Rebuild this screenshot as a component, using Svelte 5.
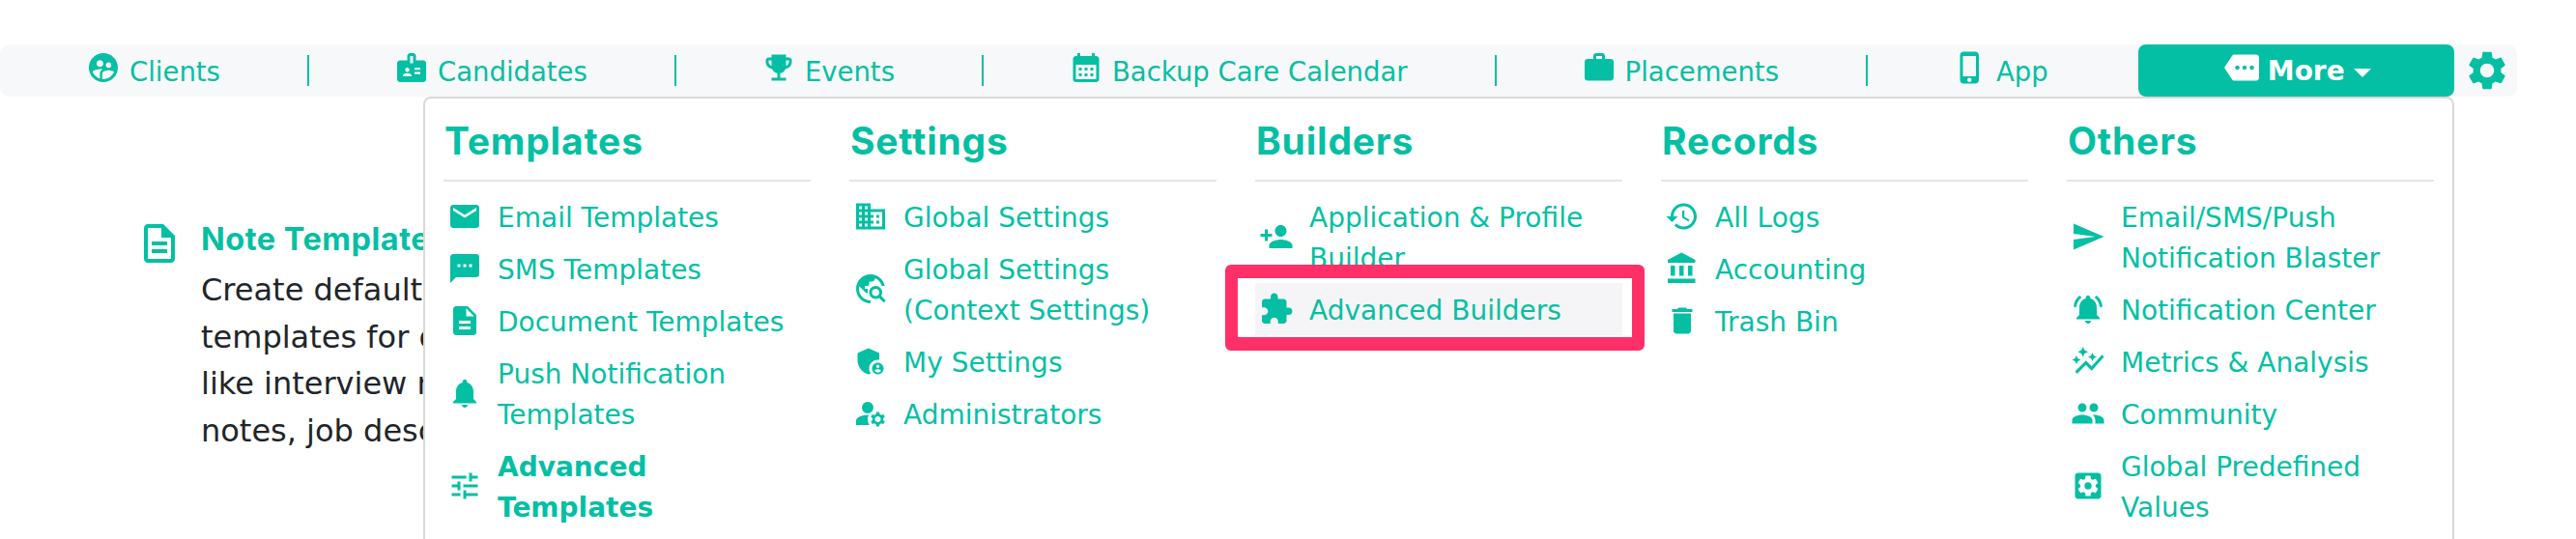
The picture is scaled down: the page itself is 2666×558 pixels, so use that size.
<script>
    // material icon paths, keyed by name
    const icons = {
        clients: "M11.99 2c-5.52 0-10 4.48-10 10s4.48 10 10 10 10-4.48 10-10-4.48-10-10-10zm3.61 6.34c1.07 0 1.93.86 1.93 1.93 0 1.07-.86 1.93-1.93 1.93-1.07 0-1.93-.86-1.93-1.93-.01-1.07.86-1.93 1.93-1.93zm-6-1.58c1.3 0 2.36 1.06 2.36 2.36 0 1.3-1.06 2.36-2.36 2.36s-2.36-1.06-2.36-2.36c0-1.31 1.05-2.36 2.36-2.36zm0 9.13v3.75c-2.4-.75-4.3-2.6-5.14-4.96 1.05-1.12 3.67-1.69 5.14-1.69.53 0 1.2.08 1.9.22-1.64.87-1.9 2.02-1.9 2.68zM11.99 20c-.27 0-.53-.01-.79-.04v-4.07c0-1.42 2.94-2.13 4.4-2.13 1.07 0 2.92.39 3.84 1.15-1.17 2.97-4.06 5.09-7.45 5.09z",
        badge: "M20 7h-5V4c0-1.1-.9-2-2-2h-2c-1.1 0-2 .9-2 2v3H4c-1.1 0-2 .9-2 2v11c0 1.1.9 2 2 2h16c1.1 0 2-.9 2-2V9c0-1.1-.9-2-2-2zM9 12c.83 0 1.5.67 1.5 1.5S9.83 15 9 15s-1.5-.67-1.5-1.5S8.17 12 9 12zm3 6H6v-.75c0-1 2-1.5 3-1.5s3 .5 3 1.5V18zm1-9h-2V4h2v5zm5 7.5h-4V15h4v1.5zm0-3h-4V12h4v1.5z",
        trophy: "M19 5h-2V3H7v2H5c-1.1 0-2 .9-2 2v1c0 2.55 1.92 4.63 4.39 4.94.63 1.5 1.98 2.63 3.61 2.96V19H7v2h10v-2h-4v-3.1c1.63-.33 2.98-1.46 3.61-2.96C19.08 12.63 21 10.55 21 8V7c0-1.1-.9-2-2-2zM5 8V7h2v3.82C5.84 10.4 5 9.3 5 8zm14 0c0 1.3-.84 2.4-2 2.82V7h2v1z",
        calendar: "M19 4h-1V2h-2v2H8V2H6v2H5c-1.11 0-1.99.9-1.99 2L3 20c0 1.1.89 2 2 2h14c1.1 0 2-.9 2-2V6c0-1.1-.9-2-2-2zm0 16H5V10h14v10zM9 14H7v-2h2v2zm4 0h-2v-2h2v2zm4 0h-2v-2h2v2zm-8 4H7v-2h2v2zm4 0h-2v-2h2v2zm4 0h-2v-2h2v2z",
        work: "M20 6h-4V4c0-1.11-.89-2-2-2h-4c-1.11 0-2 .89-2 2v2H4c-1.11 0-1.99.89-1.99 2L2 19c0 1.11.89 2 2 2h16c1.11 0 2-.89 2-2V8c0-1.11-.89-2-2-2zm-6 0h-4V4h4v2z",
        phone: "M15.5 1h-8C6.12 1 5 2.12 5 3.5v17C5 21.88 6.12 23 7.5 23h8c1.38 0 2.5-1.12 2.5-2.5v-17C18 2.12 16.88 1 15.5 1zm-4 21c-.83 0-1.5-.67-1.5-1.5s.67-1.5 1.5-1.5 1.5.67 1.5 1.5-.67 1.5-1.5 1.5zm4.5-4H7V4h9v14z",
        more: "M22 3H7c-.69 0-1.23.35-1.59.88L0 12l5.41 8.11c.36.53.9.89 1.59.89h15c1.1 0 2-.9 2-2V5c0-1.1-.9-2-2-2zM9 13.5c-.83 0-1.5-.67-1.5-1.5s.67-1.5 1.5-1.5 1.5.67 1.5 1.5-.67 1.5-1.5 1.5zm5 0c-.83 0-1.5-.67-1.5-1.5s.67-1.5 1.5-1.5 1.5.67 1.5 1.5-.67 1.5-1.5 1.5zm5 0c-.83 0-1.5-.67-1.5-1.5s.67-1.5 1.5-1.5 1.5.67 1.5 1.5-.67 1.5-1.5 1.5z",
        gear: "M19.14 12.94c.04-.3.06-.61.06-.94 0-.32-.02-.64-.07-.94l2.03-1.58c.18-.14.23-.41.12-.61l-1.92-3.32c-.12-.22-.37-.29-.59-.22l-2.39.96c-.5-.38-1.03-.7-1.62-.94l-.36-2.54c-.04-.24-.24-.41-.48-.41h-3.84c-.24 0-.43.17-.47.41l-.36 2.54c-.59.24-1.13.57-1.62.94l-2.39-.96c-.22-.08-.47 0-.59.22L2.74 8.87c-.12.21-.08.47.12.61l2.03 1.58c-.05.3-.09.63-.09.94s.02.64.07.94l-2.03 1.58c-.18.14-.23.41-.12.61l1.92 3.32c.12.22.37.29.59.22l2.39-.96c.5.38 1.03.7 1.62.94l.36 2.54c.05.24.24.41.48.41h3.84c.24 0 .44-.17.47-.41l.36-2.54c.59-.24 1.13-.56 1.62-.94l2.39.96c.22.08.47 0 .59-.22l1.92-3.32c.12-.22.07-.47-.12-.61l-2.01-1.58zM12 15.6c-1.98 0-3.6-1.62-3.6-3.6s1.62-3.6 3.6-3.6 3.6 1.62 3.6 3.6-1.62 3.6-3.6 3.6z",
        email: "M20 4H4c-1.1 0-1.99.9-1.99 2L2 18c0 1.1.9 2 2 2h16c1.1 0 2-.9 2-2V6c0-1.1-.9-2-2-2zm0 4l-8 5-8-5V6l8 5 8-5v2z",
        sms: "M20 2H4c-1.1 0-1.99.9-1.99 2L2 22l4-4h14c1.1 0 2-.9 2-2V4c0-1.1-.9-2-2-2zM9 11H7V9h2v2zm4 0h-2V9h2v2zm4 0h-2V9h2v2z",
        doc: "M14 2H6c-1.1 0-1.99.9-1.99 2L4 20c0 1.1.89 2 1.99 2H18c1.1 0 2-.9 2-2V8l-6-6zm2 16H8v-2h8v2zm0-4H8v-2h8v2zm-3-5V3.5L18.5 9H13z",
        docOutline: "M14 2H6c-1.1 0-1.99.9-1.99 2L4 20c0 1.1.89 2 1.99 2H18c1.1 0 2-.9 2-2V8l-6-6zm4 18H6V4h7v5h5v11zM8 15h8v2H8zm0-4h8v2H8z",
        bell: "M12 22c1.1 0 2-.9 2-2h-4c0 1.1.89 2 2 2zm6-6v-5c0-3.07-1.64-5.64-4.5-6.32V4c0-.83-.67-1.5-1.5-1.5s-1.5.67-1.5 1.5v.68C7.63 5.36 6 7.92 6 11v5l-2 2v1h16v-1l-2-2z",
        tune: "M3 17v2h6v-2H3zM3 5v2h10V5H3zm10 16v-2h8v-2h-8v-2h-2v6h2zM7 9v2H3v2h4v2h2V9H7zm14 4v-2H11v2h10zm-6-4h2V7h4V5h-4V3h-2v6z",
        domain: "M12 7V3H2v18h20V7H12zM6 19H4v-2h2v2zm0-4H4v-2h2v2zm0-4H4V9h2v2zm0-4H4V5h2v2zm4 12H8v-2h2v2zm0-4H8v-2h2v2zm0-4H8V9h2v2zm0-4H8V5h2v2zm10 12h-8v-2h2v-2h-2v-2h2v-2h-2V9h8v10zm-2-8h-2v2h2v-2zm0 4h-2v2h2v-2z",
        explore: "M19.3 16.9c.4-.7.7-1.5.7-2.4 0-2.5-2-4.5-4.5-4.5S11 12 11 14.5s2 4.5 4.5 4.5c.9 0 1.7-.3 2.4-.7l3.2 3.2 1.4-1.4-3.2-3.2zm-3.8.1c-1.4 0-2.5-1.1-2.5-2.5s1.1-2.5 2.5-2.5 2.5 1.1 2.5 2.5-1.1 2.5-2.5 2.5zM12 20v2C6.48 22 2 17.52 2 12S6.48 2 12 2c4.84 0 8.87 3.44 9.8 8h-2.07c-.64-2.46-2.4-4.47-4.73-5.41V5c0 1.1-.9 2-2 2h-2v2c0 .55-.45 1-1 1H8v2h2v3H9l-4.79-4.79C4.08 10.79 4 11.38 4 12c0 4.41 3.59 8 8 8z",
        shield: "M17 11c.34 0 .67.04 1 .09V6.27L10.5 3 3 6.27v4.91c0 4.54 3.2 8.79 7.5 9.82.55-.13 1.08-.32 1.6-.55-.69-.98-1.1-2.17-1.1-3.45 0-3.31 2.69-6 6-6zM17 13c-2.21 0-4 1.79-4 4s1.79 4 4 4 4-1.79 4-4-1.79-4-4-4zm0 1.38c.62 0 1.12.51 1.12 1.12s-.51 1.12-1.12 1.12-1.12-.51-1.12-1.12.5-1.12 1.12-1.12zm0 5.37c-.93 0-1.74-.46-2.24-1.17.05-.72 1.51-1.08 2.24-1.08s2.19.36 2.24 1.08c-.5.71-1.31 1.17-2.24 1.17z",
        admin: "M10.67 13.02c-.22-.01-.44-.02-.67-.02-2.42 0-4.68.67-6.61 1.82-.88.52-1.39 1.5-1.39 2.53V20h9.26c-.79-1.13-1.26-2.51-1.26-4 0-1.07.25-2.07.67-2.98zM10 4a4 4 0 1 0 0 8 4 4 0 0 0 0-8zM20.75 16c0-.22-.03-.42-.06-.63l1.14-1.01-1-1.73-1.45.49c-.32-.27-.68-.48-1.08-.63L18 11h-2l-.3 1.49c-.4.15-.76.36-1.08.63l-1.45-.49-1 1.73 1.14 1.01c-.03.21-.06.41-.06.63s.03.42.06.63l-1.14 1.01 1 1.73 1.45-.49c.32.27.68.48 1.08.63L16 21h2l.3-1.49c.4-.15.76-.36 1.08-.63l1.45.49 1-1.73-1.14-1.01c.03-.21.06-.41.06-.63zM17 18c-1.1 0-2-.9-2-2s.9-2 2-2 2 .9 2 2-.9 2-2 2z",
        personAdd: "M15 12c2.21 0 4-1.79 4-4s-1.79-4-4-4-4 1.79-4 4 1.79 4 4 4zm-9-2V7H4v3H1v2h3v3h2v-3h3v-2H6zm9 4c-2.67 0-8 1.34-8 4v2h16v-2c0-2.66-5.33-4-8-4z",
        puzzle: "M20.5 11H19V7c0-1.1-.9-2-2-2h-4V3.5C13 2.12 11.88 1 10.5 1S8 2.12 8 3.5V5H4c-1.1 0-1.99.9-1.99 2v3.8H3.5c1.49 0 2.7 1.21 2.7 2.7s-1.21 2.7-2.7 2.7H2V20c0 1.1.9 2 2 2h3.8v-1.5c0-1.49 1.21-2.7 2.7-2.7 1.49 0 2.7 1.21 2.7 2.7V22H17c1.1 0 2-.9 2-2v-4h1.5c1.38 0 2.5-1.12 2.5-2.5S21.88 11 20.5 11z",
        history: "M13 3c-4.97 0-9 4.03-9 9H1l3.89 3.89.07.14L9 12H6c0-3.87 3.13-7 7-7s7 3.13 7 7-3.13 7-7 7c-1.93 0-3.68-.79-4.94-2.06l-1.42 1.42C8.27 19.99 10.51 21 13 21c4.97 0 9-4.03 9-9s-4.03-9-9-9zm-1 5v5l4.28 2.54.72-1.21-3.5-2.08V8H12z",
        bank: "M4 10v7h3v-7H4zm6 0v7h3v-7h-3zM2 22h19v-3H2v3zm14-12v7h3v-7h-3zm-4.5-9L2 6v2h19V6l-9.5-5z",
        trash: "M6 19c0 1.1.9 2 2 2h8c1.1 0 2-.9 2-2V7H6v12zM19 4h-3.5l-1-1h-5l-1 1H5v2h14V4z",
        send: "M2.01 21L23 12 2.01 3 2 10l15 2-15 2z",
        bellActive: "M7.58 4.08L6.15 2.65C3.75 4.48 2.17 7.3 2.03 10.5h2c.15-2.65 1.51-4.97 3.55-6.42zm12.39 6.42h2c-.15-3.2-1.73-6.02-4.12-7.85l-1.42 1.43c2.02 1.45 3.39 3.77 3.54 6.42zM18 11c0-3.07-1.64-5.64-4.5-6.32V4c0-.83-.67-1.5-1.5-1.5s-1.5.67-1.5 1.5v.68C7.63 5.36 6 7.92 6 11v5l-2 2v1h16v-1l-2-2v-5zm-6 11c.14 0 .27-.01.4-.04.65-.14 1.18-.58 1.44-1.18.1-.24.15-.5.15-.78h-4c.01 1.1.9 2 2.01 2z",
        graph: "M14.06 9.94L12 9l2.06-.94L15 6l.94 2.06L18 9l-2.06.94L15 12l-.94-2.06zM4 14l.94-2.06L7 11l-2.06-.94L4 8l-.94 2.06L1 11l2.06.94L4 14zm4.5-5l1.09-2.41L12 5.5 9.59 4.41 8.5 2 7.41 4.41 5 5.5l2.41 1.09L8.5 9zm-4 11.5l6-6.01 4 4L23 8.93l-1.41-1.41-7.09 7.97-4-4L3 19l1.5 1.5z",
        people: "M16 11c1.66 0 2.99-1.34 2.99-3S17.66 5 16 5c-1.66 0-3 1.34-3 3s1.34 3 3 3zm-8 0c1.66 0 2.99-1.34 2.99-3S9.66 5 8 5C6.34 5 5 6.34 5 8s1.34 3 3 3zm0 2c-2.33 0-7 1.17-7 3.5V19h14v-2.5c0-2.33-4.67-3.5-7-3.5zm8 0c-.29 0-.62.02-.97.05 1.16.84 1.97 1.97 1.97 3.45V19h6v-2.5c0-2.33-4.67-3.5-7-3.5z",
        apps: "M19 3H5c-1.1 0-2 .9-2 2v14c0 1.1.9 2 2 2h14c1.1 0 2-.9 2-2V5c0-1.1-.9-2-2-2zm-1.75 9c0 .23-.02.46-.05.68l1.48 1.16c.13.11.17.3.08.45l-1.4 2.42c-.09.15-.27.21-.43.15l-1.74-.7c-.36.28-.76.51-1.18.69l-.26 1.85c-.03.17-.18.3-.35.3h-2.8c-.17 0-.32-.13-.35-.29l-.26-1.85c-.43-.18-.82-.41-1.18-.69l-1.74.7c-.16.06-.34 0-.43-.15l-1.4-2.42c-.09-.15-.05-.34.08-.45l1.48-1.16c-.03-.23-.05-.46-.05-.69 0-.23.02-.46.05-.68l-1.48-1.16c-.13-.11-.17-.3-.08-.45l1.4-2.42c.09-.15.27-.21.43-.15l1.74.7c.36-.28.76-.51 1.18-.69l.26-1.85c.03-.17.18-.3.35-.3h2.8c.17 0 .32.13.35.29l.26 1.85c.43.18.82.41 1.18.69l1.74-.7c.16-.06.34 0 .43.15l1.4 2.42c.09.15.05.34-.08.45l-1.48 1.16c.03.23.05.46.05.69zM12 9.5c-1.38 0-2.5 1.12-2.5 2.5s1.12 2.5 2.5 2.5 2.5-1.12 2.5-2.5-1.12-2.5-2.5-2.5z"
    };

    const navItems = [
        { label: "Clients", icon: "clients" },
        { label: "Candidates", icon: "badge" },
        { label: "Events", icon: "trophy" },
        { label: "Backup Care Calendar", icon: "calendar" },
        { label: "Placements", icon: "work" },
        { label: "App", icon: "phone" }
    ];

    const menu = [
        {
            title: "Templates",
            items: [
                { label: "Email Templates", icon: "email" },
                { label: "SMS Templates", icon: "sms" },
                { label: "Document Templates", icon: "doc" },
                { label: "Push Notification Templates", icon: "bell" },
                { label: "Advanced Templates", icon: "tune", bold: true }
            ]
        },
        {
            title: "Settings",
            items: [
                { label: "Global Settings", icon: "domain" },
                { label: "Global Settings (Context Settings)", icon: "explore" },
                { label: "My Settings", icon: "shield" },
                { label: "Administrators", icon: "admin" }
            ]
        },
        {
            title: "Builders",
            items: [
                { label: "Application & Profile Builder", icon: "personAdd" },
                { label: "Advanced Builders", icon: "puzzle", active: true }
            ]
        },
        {
            title: "Records",
            items: [
                { label: "All Logs", icon: "history" },
                { label: "Accounting", icon: "bank" },
                { label: "Trash Bin", icon: "trash" }
            ]
        },
        {
            title: "Others",
            items: [
                { label: "Email/SMS/Push Notification Blaster", icon: "send" },
                { label: "Notification Center", icon: "bellActive" },
                { label: "Metrics & Analysis", icon: "graph" },
                { label: "Community", icon: "people" },
                { label: "Global Predefined Values", icon: "apps" }
            ]
        }
    ];
</script>

<div class="page">
    <nav class="nav">
        {#each navItems as item, i}
            {#if i > 0}<span class="sep"></span>{/if}
            <a class="nav-item" class:first={i === 0} href="#top">
                <svg class="nav-icon" viewBox="0 0 24 24"><path d={icons[item.icon]} /></svg>
                {item.label}
            </a>
        {/each}
        <button class="more">
            <svg class="more-icon" viewBox="0 0 24 24"><path d={icons.more} /></svg>
            More
            <span class="caret"></span>
        </button>
        <svg class="gear" viewBox="0 0 24 24"><path d={icons.gear} /></svg>

        <div class="dropdown">
            {#each menu as col}
                <div class="col">
                    <h3>{col.title}</h3>
                    <ul>
                        {#each col.items as item}
                            <li class:active={item.active} class:bold={item.bold}>
                                <svg class="row-icon" viewBox="0 0 24 24"><path d={icons[item.icon]} /></svg>
                                <span class="row-label">{item.label}</span>
                                {#if item.active}<i class="callout"></i>{/if}
                            </li>
                        {/each}
                    </ul>
                </div>
            {/each}
        </div>
    </nav>

    <section class="note">
        <svg class="note-icon" viewBox="0 0 24 24"><path d={icons.docOutline} /></svg>
        <div>
            <h4>Note Templates</h4>
            <p>Create default note<br />templates for different<br />like interview notes,<br />notes, job descriptions</p>
        </div>
    </section>
</div>

<style>
    :global(body) {
        margin: 0;
        background: #fff;
    }

    .page {
        height: 558px;
        overflow: hidden;
        padding-top: 46px;
        box-sizing: border-box;
        font-family: "DejaVu Sans", sans-serif;
        color: #04bfa3;
    }

    .nav {
        position: relative;
        display: flex;
        align-items: center;
        width: 2605px;
        height: 54px;
        background: #f7f8fa;
        border-radius: 10px;
        font-size: 28px;
    }

    .nav-item {
        display: flex;
        align-items: center;
        gap: 9px;
        padding: 2px 91px 0 89px;
        font-size: 27.5px;
        color: inherit;
        text-decoration: none;
        white-space: nowrap;
    }

    .nav-item.first {
        padding-left: 89px;
    }

    .nav-icon {
        width: 36px;
        height: 36px;
        fill: currentColor;
        margin-top: -8px;
    }

    .sep {
        width: 2px;
        height: 32px;
        margin-left: -1px;
        margin-right: -1px;
        background: #04bfa3;
    }

    .more {
        display: flex;
        align-items: center;
        justify-content: center;
        gap: 9px;
        width: 327px;
        height: 54px;
        margin-left: 2px;
        padding: 0 0 0 3px;
        border: 0;
        border-radius: 8px;
        background: #04bfa3;
        color: #fff;
        font: bold 28px "DejaVu Sans", sans-serif;
    }

    .more-icon {
        width: 36px;
        height: 36px;
        margin-top: -6px;
        fill: currentColor;
    }

    .caret {
        width: 0;
        height: 0;
        border-left: 9px solid transparent;
        border-right: 9px solid transparent;
        border-top: 9px solid #fff;
        margin-top: 4px;
    }

    .gear {
        width: 48px;
        height: 48px;
        margin-left: 10px;
        fill: #04bfa3;
    }

    .dropdown {
        position: absolute;
        z-index: 2;
        top: 54px;
        left: 438px;
        display: flex;
        gap: 40px;
        width: 2102px;
        box-sizing: border-box;
        padding: 0 19px 40px;
        background: #fff;
        border: 2px solid #d9d9d9;
        border-radius: 8px;
    }

    .col {
        width: 380px;
    }

    h3 {
        margin: 0;
        height: 84px;
        padding-left: 1px;
        font: 700 39px/88px Inter, sans-serif;
        letter-spacing: 0.8px;
        border-bottom: 2px solid #e5e5e5;
    }

    ul {
        list-style: none;
        margin: 9px 0 0;
        padding: 0;
    }

    li {
        position: relative;
        display: flex;
        align-items: center;
        gap: 16px;
        padding: 6px 0 6px 4px;
        line-height: 42px;
    }

    li.bold {
        font-weight: bold;
    }

    li.active {
        background: #f5f5f7;
    }

    .row-icon {
        flex: none;
        width: 36px;
        height: 36px;
        fill: currentColor;
    }

    .row-label {
        padding-top: 2px;
        margin-bottom: -2px;
    }

    .callout {
        position: absolute;
        left: -31px;
        top: -19px;
        width: 434px;
        height: 89px;
        box-sizing: border-box;
        border: solid #ff3068;
        border-width: 14px 13px;
        border-radius: 6px;
    }

    .note {
        display: flex;
        gap: 19px;
        margin: 128px 0 0 141px;
    }

    .note-icon {
        flex: none;
        width: 48px;
        height: 48px;
        fill: #04bfa3;
    }

    h4 {
        margin: 0;
        font: 700 32.5px/40px Inter, sans-serif;
        letter-spacing: 0.5px;
    }

    p {
        margin: 8px 0 0;
        color: #212529;
        font-size: 32px;
        line-height: 48.6px;
        white-space: nowrap;
    }
</style>
